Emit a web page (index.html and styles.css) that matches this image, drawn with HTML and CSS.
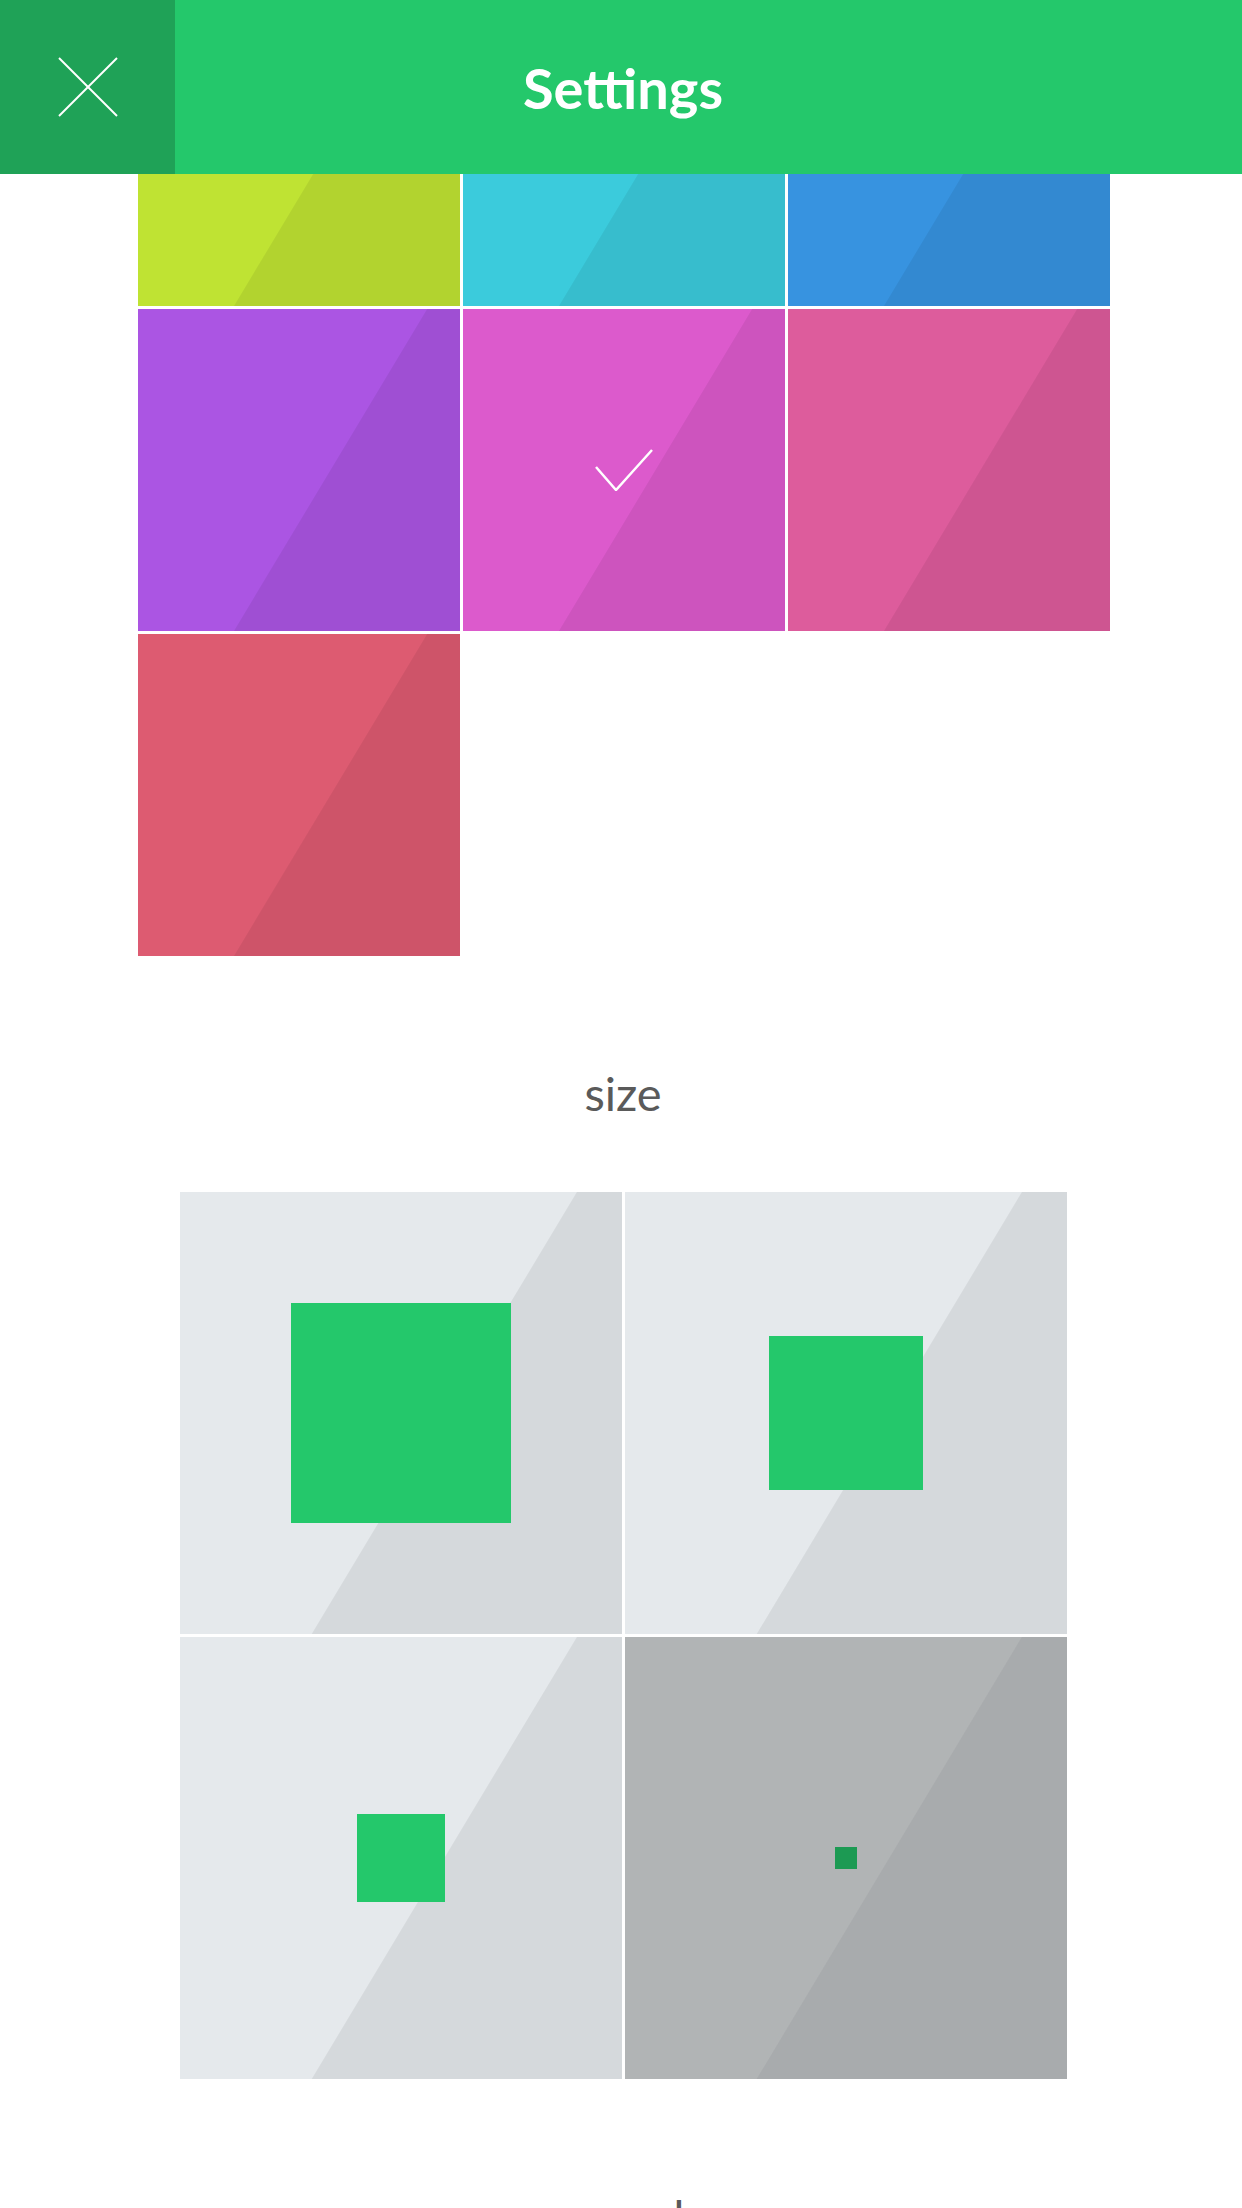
FILE: index.html
```html
<!DOCTYPE html>
<html>
<head>
  <title>Settings</title>
  <link rel="stylesheet" href="styles.css">
</head>
<body>
  <header class="topbar">
    <button class="close-btn" aria-label="Close">
      <svg width="60" height="60" viewBox="0 0 60 60">
        <line x1="1" y1="1" x2="59" y2="59" />
        <line x1="59" y1="1" x2="1" y2="59" />
      </svg>
    </button>
    <h1 class="title">Settings</h1>
    <div class="spacer"></div>
  </header>

  <main class="scroller">
    <div class="content">
      <section class="swatches">
        <div class="swatch lime"></div>
        <div class="swatch cyan"></div>
        <div class="swatch blue"></div>
        <div class="swatch purple"></div>
        <div class="swatch magenta">
          <svg class="check" width="58" height="42" viewBox="0 0 58 42">
            <polyline points="1,18 21,41 57,1" />
          </svg>
        </div>
        <div class="swatch pink"></div>
        <div class="swatch red"></div>
      </section>

      <h2 class="section-title">size</h2>

      <section class="sizes">
        <div class="size-tile"><div class="square big"></div></div>
        <div class="size-tile"><div class="square medium"></div></div>
        <div class="size-tile"><div class="square small"></div></div>
        <div class="size-tile selected"><div class="square tiny"></div></div>
      </section>

      <h2 class="section-title">speed</h2>
    </div>
  </main>
</body>
</html>
```

FILE: styles.css
```css
body {
  margin: 0;
  background: #fff;
  font-family: Lato, "Open Sans", sans-serif;
  overflow: hidden;
}
.topbar {
  display: grid;
  grid-template-columns: 175px 1fr 175px;
  height: 174px;
  background-color: #24c86b;
}
.close-btn {
  display: flex;
  align-items: center;
  justify-content: center;
  border: none;
  padding: 0;
  background-color: #1fa257;
}
.close-btn line {
  stroke: #fff;
  stroke-width: 2;
}
.title {
  margin: 0;
  padding-left: 4px;
  align-self: center;
  text-align: center;
  color: #fff;
  font-size: 56px;
  font-weight: 700;
}
.scroller {
  height: 2034px;
  overflow: hidden;
}
.content {
  margin-top: -190px;
}
.swatches {
  display: grid;
  grid-template-columns: repeat(3, 322px);
  grid-auto-rows: 322px;
  gap: 3px;
  padding-left: 138px;
}
.swatch, .size-tile {
  position: relative;
  display: flex;
  align-items: center;
  justify-content: center;
}
.swatch::after, .size-tile::after {
  content: "";
  position: absolute;
  inset: 0;
  background: rgba(0, 0, 0, 0.065);
  clip-path: polygon(89.8% 0, 100% 0, 100% 100%, 29.8% 100%);
}
.lime { background-color: #bfe333; }
.cyan { background-color: #3bcbdc; }
.blue { background-color: #3793e0; }
.purple { background-color: #ab55e3; }
.magenta { background-color: #dc5acc; }
.pink { background-color: #dd5c9c; }
.red { background-color: #dd5b71; }
.check {
  position: relative;
  z-index: 1;
}
.check polyline {
  fill: none;
  stroke: #fff;
  stroke-width: 2.5;
}
.section-title {
  margin: 0;
  padding: 108px 0 70px 4px;
  text-align: center;
  color: #5a5a5a;
  font-size: 47px;
  font-weight: 400;
  line-height: 58px;
}
.sizes {
  display: grid;
  grid-template-columns: repeat(2, 442px);
  grid-auto-rows: 442px;
  gap: 3px;
  padding-left: 180px;
}
.size-tile {
  background-color: #e5e9ec;
}
.size-tile.selected {
  background-color: #b1b4b5;
}
.size-tile.selected::after {
  background: rgba(40, 30, 50, 0.06);
}
.square {
  position: relative;
  z-index: 1;
  background-color: #24c86b;
}
.selected .square {
  background-color: #1c9a53;
}
.big { width: 220px; height: 220px; }
.medium { width: 154px; height: 154px; }
.small { width: 88px; height: 88px; }
.tiny { width: 22px; height: 22px; }
```
